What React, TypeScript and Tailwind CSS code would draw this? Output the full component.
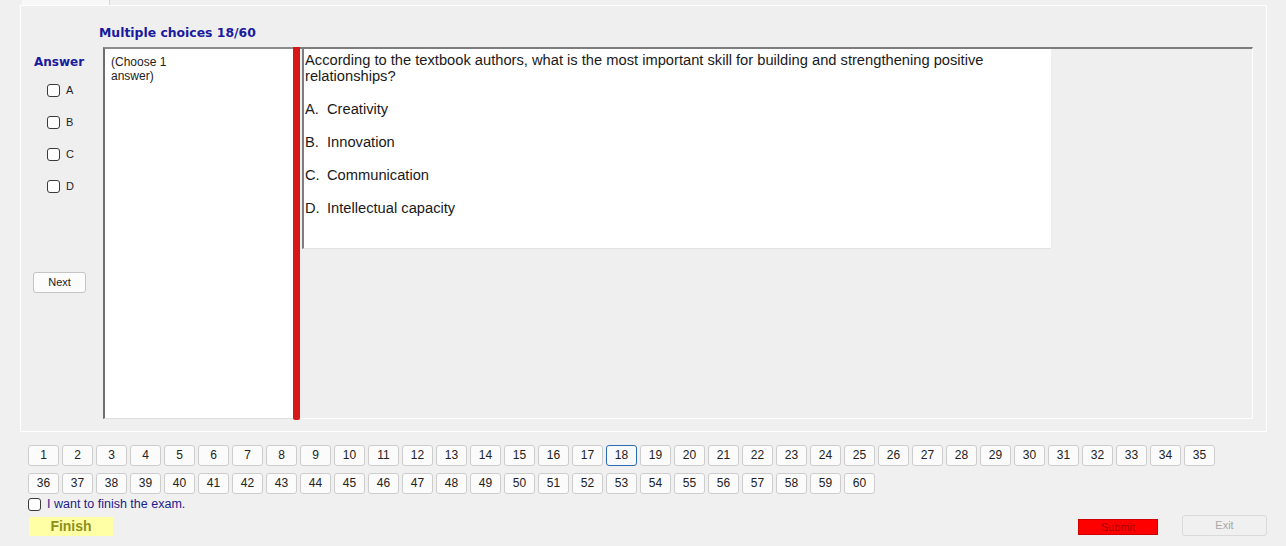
import React from "react";

const row1 = Array.from({ length: 35 }, (_, i) => i + 1);
const row2 = Array.from({ length: 25 }, (_, i) => i + 36);

function Box() {
  return <span className="inline-block w-[13px] h-[13px] border border-[#3a3a3a] rounded-[3px] bg-white shrink-0" />;
}

function NavButton({ n }: { n: number }) {
  const current = n === 18;
  return (
    <button
      className={
        current
          ? "w-[31px] h-[21px] rounded-[3px] border border-[#2c6cae] bg-[#f7f9fb] text-[12px] leading-[19px] text-[#222]"
          : "w-[31px] h-[21px] rounded-[3px] border border-[#cdcdcd] bg-[#fbfbfb] text-[12px] leading-[19px] text-[#222]"
      }
    >
      {n}
    </button>
  );
}

export default function App() {
  const answers = ["A", "B", "C", "D"];
  const options = [
    ["A.", "Creativity"],
    ["B.", "Innovation"],
    ["C.", "Communication"],
    ["D.", "Intellectual capacity"],
  ];

  return (
    <div className="w-[1286px] h-[546px] overflow-hidden bg-[#f0f0f0] font-['Liberation_Sans',Arial,sans-serif] text-[#1a1a1a]">
      {/* tab strip */}
      <div className="h-[5px] flex">
        <div className="ml-[22px] w-[88px] h-[5px] bg-[#f8f8f8] border-r border-[#d8d8d8]" />
      </div>

      {/* tab page */}
      <div className="ml-[20px] w-[1247px] h-[427px] border border-white bg-[#efefef] flex flex-col">
        <div className="mt-[19px] ml-[78px] h-[15px] font-['DejaVu_Sans',Verdana,sans-serif] text-[12.4px] leading-[15px] font-bold text-[#1a1a9e]">
          Multiple choices 18/60
        </div>

        <div className="mt-[7px] h-[372px] flex">
          {/* answer column */}
          <div className="w-[82px] flex flex-col">
            <div className="mt-[8px] ml-[13px] font-['DejaVu_Sans',Verdana,sans-serif] text-[12px] leading-[15px] font-bold text-[#1a1a9e]">
              Answer
            </div>
            <div className="mt-[14px] ml-[26px] flex flex-col gap-[19px]">
              {answers.map((a) => (
                <label key={a} className="flex items-center gap-[6px] h-[13px] text-[11px] text-[#222]">
                  <Box />
                  {a}
                </label>
              ))}
            </div>
            <button className="mt-[79px] ml-[12px] w-[53px] h-[21px] rounded-[3px] border border-[#c4c4c4] bg-[#fcfcfc] text-[11px] leading-[19px] text-[#222]">
              Next
            </button>
          </div>

          {/* choose panel */}
          <div className="w-[190px] bg-white border-l-2 border-t-2 border-b border-l-[#6e6e6e] border-t-[#8c8c8c] border-b-[#dedede] pt-[6px] pl-[6px] text-[12px] leading-[14px] text-[#222]">
            (Choose 1
            <br />
            answer)
          </div>

          {/* red bar */}
          <div className="w-[7px] h-[373px] bg-[#d81818] rounded-b-[2px]" />

          {/* question panel */}
          <div className="w-[953px] border-t-2 border-r border-b border-t-[#7d7d7d] border-r-white border-b-white flex">
            <div className="ml-[2px] w-[749px] h-[200px] bg-white border-l-2 border-b border-l-[#7d7d7d] border-b-[#e2e2e2] pt-[3px] pl-[1px] text-[14.7px] leading-[16px] text-[#1a1a1a]">
              <div>
                According to the textbook authors, what is the most important skill for building and strengthening positive
                <br />
                relationships?
              </div>
              {options.map(([k, v]) => (
                <div key={k} className="mt-[17px] flex">
                  <span className="w-[22px]">{k}</span>
                  <span>{v}</span>
                </div>
              ))}
            </div>
          </div>
        </div>
      </div>

      {/* bottom area */}
      <div className="pl-[28px] pr-[19px] flex flex-col">
        <div className="mt-[13px] flex gap-[3px]">
          {row1.map((n) => (
            <NavButton key={n} n={n} />
          ))}
        </div>
        <div className="mt-[7px] flex gap-[3px]">
          {row2.map((n) => (
            <NavButton key={n} n={n} />
          ))}
        </div>
        <div className="mt-[3px] h-[14px] flex items-center gap-[6px] text-[12.5px] text-[#1c1c8c]">
          <Box />
          <span>I want to finish the exam.</span>
        </div>
        <div className="mt-[4px] flex items-start">
          <button className="mt-[2px] ml-[1px] w-[84px] h-[19px] bg-[#ffffa6] text-[14px] leading-[19px] font-bold text-[#8f8f1a]">
            Finish
          </button>
          <div className="flex-1" />
          <button className="mt-[4px] w-[80px] h-[16px] bg-[#ff0000] border border-[#d00000] text-[11px] leading-[14px] text-[#a80000]">
            Submit
          </button>
          <button className="ml-[24px] w-[85px] h-[21px] rounded-[3px] border border-[#dadada] bg-[#f0f0f0] text-[11px] leading-[19px] text-[#a8a8a8]">
            Exit
          </button>
        </div>
      </div>
    </div>
  );
}
